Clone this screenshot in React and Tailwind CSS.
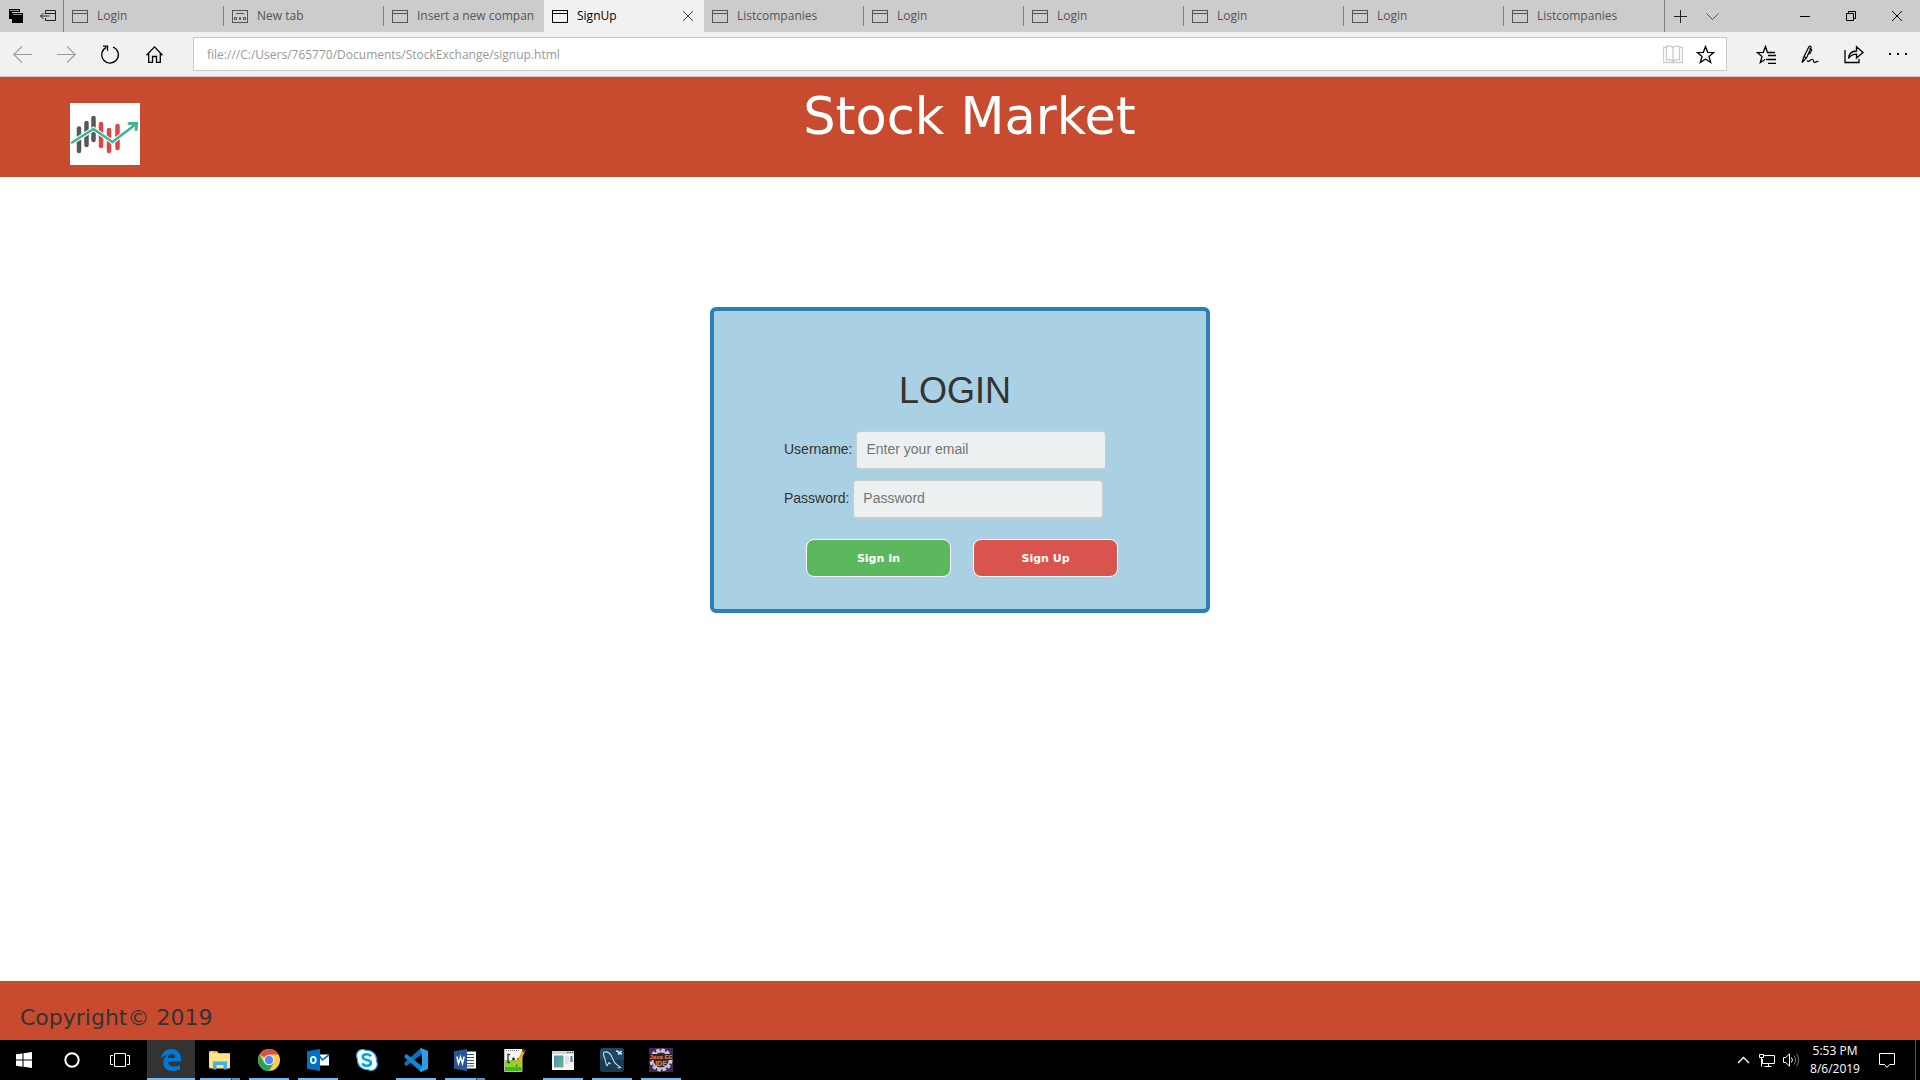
const tabs = [
  { title: "Login" },
  { title: "New tab", kind: "new" },
  { title: "Insert a new compan" },
  { title: "SignUp", active: true },
  { title: "Listcompanies" },
  { title: "Login" },
  { title: "Login" },
  { title: "Login" },
  { title: "Login" },
  { title: "Listcompanies" },
];

function Svg({ w, h, children, className = "" }) {
  return (
    <svg
      width={w}
      height={h}
      viewBox={`0 0 ${w} ${h}`}
      fill="none"
      stroke="currentColor"
      className={`block shrink-0 ${className}`}
      aria-hidden="true"
    >
      {children}
    </svg>
  );
}

function TabIcon({ kind }) {
  return (
    <Svg w={16} h={13}>
      <rect x="0.5" y="0.5" width="15" height="12" />
      {kind === "new" ? (
        <>
          <path d="M4 3.5h8" />
          <path d="M2.500 7.500h2v2h-2zM11.500 7.500h2v2h-2zM7.500 7.500h1v2h-1z" />
        </>
      ) : (
        <path d="M0 3.5h16" />
      )}
    </Svg>
  );
}

function Tab({ tab, divider }) {
  const tone = tab.active ? "bg-[#f1f1f1] text-black" : "text-[#555]";
  return (
    <div className={`flex min-w-0 flex-1 items-center ${tone}`}>
      <button type="button" className="flex h-8 min-w-0 flex-1 items-center gap-2 pl-2">
        <TabIcon kind={tab.kind} />
        <span className="flex-1 overflow-hidden whitespace-nowrap pl-px text-left text-xs leading-5">
          {tab.title}
        </span>
      </button>
      {tab.active && (
        <button type="button" aria-label="Close tab" className="flex h-8 w-8 items-center justify-center text-[#444]">
          <Svg w={10} h={10}>
            <path d="M0 0l10 10M10 0L0 10" />
          </Svg>
        </button>
      )}
      {divider && <span className="h-5 w-px bg-[#808080]" />}
    </div>
  );
}

function TabBar() {
  return (
    <div className="flex h-8 items-stretch bg-[#ccc]">
      <div className="flex w-16 shrink-0 items-center justify-between border-r border-[#808080] pl-[9px] pr-[7px]">
        <button type="button" aria-label="Tabs you have set aside">
          <Svg w={14} h={14}>
            <path d="M0 0h11v3H3v7H0z" fill="black" stroke="none" />
            <path d="M3 4h11v10H3z" fill="black" stroke="none" />
            <path d="M1 1.500h9M4 5.500h9" stroke="#ccc" strokeWidth="0.7" />
          </Svg>
        </button>
        <button type="button" aria-label="Set these tabs aside" className="text-[#222]">
          <Svg w={16} h={12}>
            <path d="M5.500 4V.5h10v10h-10V8M5 3.500h11M.5 6h9M3.500 3L.5 6l3 3" />
          </Svg>
        </button>
      </div>
      <div className="flex min-w-0 flex-1">
        {tabs.map((tab, i) => (
          <Tab key={i} tab={tab} divider={!tab.active && i !== 2 && i !== tabs.length - 1} />
        ))}
      </div>
      <div className="flex w-[118px] shrink-0 items-center border-l border-[#808080] text-[#222]">
        <button type="button" aria-label="New tab" className="flex h-8 w-[30px] items-center justify-center">
          <Svg w={13} h={13}>
            <path d="M6.500 0v13M0 6.500h13" />
          </Svg>
        </button>
        <button type="button" aria-label="Show tab previews" className="flex h-8 w-[34px] items-center justify-center text-[#555]">
          <Svg w={13} h={7}>
            <path d="M.5.5l6 6 6-6" />
          </Svg>
        </button>
      </div>
      <div className="flex shrink-0 text-black">
        <button type="button" aria-label="Minimize" className="flex w-[46px] items-center justify-center">
          <Svg w={10} h={1}>
            <path d="M0 .5h10" />
          </Svg>
        </button>
        <button type="button" aria-label="Restore" className="flex w-[46px] items-center justify-center">
          <Svg w={10} h={10}>
            <path d="M.5 2.500h7v7h-7zM2.500 2V.5h7v7H8" />
          </Svg>
        </button>
        <button type="button" aria-label="Close" className="flex w-[46px] items-center justify-center">
          <Svg w={10} h={10}>
            <path d="M0 0l10 10M10 0L0 10" />
          </Svg>
        </button>
      </div>
    </div>
  );
}

function ToolButton({ label, className = "", children }) {
  return (
    <button type="button" aria-label={label} className={`flex h-[44px] w-[44px] shrink-0 items-center justify-center ${className}`}>
      {children}
    </button>
  );
}

function Toolbar() {
  return (
    <div className="flex h-[45px] items-center border-b border-[#c8c8c8] bg-[#f1f1f1] text-black">
      <ToolButton label="Back" className="text-[#999]">
        <Svg w={19} h={17}>
          <path d="M19 8.500H.8M9 .4L.8 8.500 9 16.600" strokeWidth="1.1" />
        </Svg>
      </ToolButton>
      <ToolButton label="Forward" className="text-[#999]">
        <Svg w={19} h={17}>
          <path d="M0 8.500h18.200M10 .4l8.200 8.100-8.200 8.100" strokeWidth="1.1" />
        </Svg>
      </ToolButton>
      <ToolButton label="Refresh">
        <Svg w={18} h={19}>
          <path d="M12 2a8.300 8.300 0 1 1-6.800.4M2 1.200h4.500v4.600" strokeWidth="1.3" />
        </Svg>
      </ToolButton>
      <ToolButton label="Home">
        <Svg w={17} h={17}>
          <path d="M.5 9.200l8-8.300 8 8.300M2.700 7.500v8.800h3.800v-5.800h4v5.800h3.800V7.500" strokeWidth="1.3" />
        </Svg>
      </ToolButton>
      <div className="mx-[17px] flex h-[34px] min-w-0 flex-1 items-center border border-[#c8c8c8] bg-white pl-[13px] pr-[5px]">
        <input
          aria-label="Address"
          defaultValue="file:///C:/Users/765770/Documents/StockExchange/signup.html"
          className="h-8 min-w-0 flex-1 bg-transparent text-xs text-[#999] outline-none"
        />
        <button type="button" aria-label="Reading view" className="flex w-8 justify-center text-[#ccc]">
          <Svg w={20} h={19}>
            <path d="M10 2.500v14M10 2.500C8.500.7 5 .7 3.500 1.500v13.500c2-.6 5-.4 6.500 1.500 1.500-1.900 4.500-2.100 6.500-1.500V1.500c-1.500-.8-5-.8-6.500 1M3.500 2.500h-3v15h19v-15h-3" strokeWidth="1.3" />
          </Svg>
        </button>
        <button type="button" aria-label="Add to favorites" className="flex w-8 justify-center">
          <Svg w={19} h={19}>
            <path d="M9.500 1.500l2.200 5.800 6.100.2-4.800 3.900 1.700 6.100-5.200-3.500-5.200 3.500L6 11.400 1.200 7.500l6.100-.2z" strokeWidth="1.3" />
          </Svg>
        </button>
      </div>
      <ToolButton label="Hub">
        <Svg w={20} h={19}>
          <path d="M19 7.500h-7.500L9.500 1.500 7.300 7.300l-6.100.2L6 11.400l-1.700 6.100L9 14.500M12 10.500h8M10 14.500h10M12 18.500h8" strokeWidth="1.3" />
        </Svg>
      </ToolButton>
      <ToolButton label="Add notes">
        <Svg w={18} h={19}>
          <path d="M1 17.500l2-6L8 1.600c1-.9 2.500-.2 2 1.200L5.500 13l-4.500 4.500zM3 11.500L5.500 13M8.500 3l2.300 2-2.300 4.200M6 15.500c2 3 3.500-2 5.500-1s.5 3 2.500 2.800 1.500-1.500 3.500-.8" strokeWidth="1.2" />
        </Svg>
      </ToolButton>
      <ToolButton label="Share">
        <Svg w={20} h={19}>
          <path d="M1 5v12.500h14V14M4.500 13.500C5 8 8.500 6 12.500 6V1.700L19 7.500l-6.500 5.500V9.200c-3.500 0-6 1.300-8 4.300z" strokeWidth="1.3" />
        </Svg>
      </ToolButton>
      <ToolButton label="Settings and more">
        <Svg w={18} h={3}>
          <path d="M0 0h2v2H0zM8 0h2v2H8zM16 0h2v2h-2z" fill="black" stroke="none" />
        </Svg>
      </ToolButton>
    </div>
  );
}

function Logo() {
  const bars = [
    [9, 25.500, 48, "#555759"],
    [16.500, 20, 42, "#555759"],
    [23.500, 15, 37, "#555759"],
    [31, 21, 43, "#de4545"],
    [39, 27, 48, "#de4545"],
    [47.500, 23, 45, "#de4545"],
  ];
  return (
    <svg width="70" height="62" viewBox="0 0 70 62" className="block shrink-0 bg-white" role="img" aria-label="Stock Market logo">
      {bars.map(([x, y1, y2, c]) => (
        <path key={x} d={`M${x} ${y1}V${y2}`} stroke={c} strokeWidth="4.500" strokeLinecap="round" />
      ))}
      <path d="M2 39.500L23.500 26 42.500 39 66 21" fill="none" stroke="white" strokeWidth="4.500" />
      <path d="M2 39.500L23.500 26 42.500 39 66 21" fill="none" stroke="#3ab795" strokeWidth="2.600" strokeLinecap="round" />
      <path d="M59 20.500h7.500l-.3 6" fill="none" stroke="#3ab795" strokeWidth="3" strokeLinecap="round" />
    </svg>
  );
}

function Field({ id, label, ...rest }) {
  return (
    <div className="flex items-center gap-1">
      <label htmlFor={id} className="pb-[3px]">{label}</label>
      <input
        id={id}
        className="h-[39px] w-[250px] rounded border border-b-2 border-[#ccc] bg-[#ecf0f1] px-[9px] pb-0.5 text-sm outline-none placeholder:text-[#757575]"
        {...rest}
      />
    </div>
  );
}

function LoginCard() {
  return (
    <form className="mx-auto mt-[130px] w-[500px] rounded-md border-4 border-[#2980b9] bg-[#aad0e3] pb-8 pl-[70px] pr-20 pt-[59px] font-['Liberation_Sans',sans-serif] text-sm text-[#333]">
      <h1 className="mb-[19px] text-center text-4xl leading-[42px]">LOGIN</h1>
      <div className="flex flex-col gap-2.5">
        <Field id="username" label="Username:" type="text" placeholder="Enter your email" />
        <Field id="password" label="Password:" type="password" placeholder="Password" />
      </div>
      <div className="mt-5 flex gap-[22px] pl-[22px] font-['DejaVu_Sans',sans-serif] text-[11px] font-black text-white">
        <button type="button" className="h-[38px] w-[145px] shrink-0 rounded-lg border border-white bg-[#5cb85c] pt-0.5">
          Sign In
        </button>
        <button type="button" className="h-[38px] w-[145px] shrink-0 rounded-lg border border-white bg-[#d9534f] pt-0.5">
          Sign Up
        </button>
      </div>
    </form>
  );
}

function EdgeIcon() {
  return (
    <svg width="20" height="22" viewBox="0 0 20 22">
      <path d="M0 9.500C.8 4 4.500 0 10.300 0 16.500 0 20 4.500 20 10v2.500H6.800c.2 3.500 3 5 6.200 5 2.300 0 4.300-.6 6-1.700v4.400c-2 1.200-4.500 1.800-7.200 1.800C6.200 22 2.300 18.700 2.300 13.500c0-3.300 1.700-6 4.500-7.500C3.800 6.200 1.500 7.500 0 9.500zm6.900-.6h7.200c0-2.400-1.200-3.900-3.400-3.900-2.100 0-3.500 1.500-3.800 3.900z" fill="#0078d7" />
    </svg>
  );
}

function ExplorerIcon() {
  return (
    <svg width="22" height="19" viewBox="0 0 22 19">
      <path d="M0 1.500V1q0-.7.700-.7H8L9.500 2H21v15.500H.8L0 16z" fill="#fde28a" />
      <path d="M1 0h7v2H1zM9 2h12v1H9z" fill="#e9b53a" />
      <path d="M2 .6h2v1H2z" fill="#fff" />
      <path d="M4 18.500V10.500h14v8h-3.500v-4.500h-7v4.500z" fill="#3eb3e6" />
    </svg>
  );
}

function ChromeIcon() {
  return (
    <svg width="22" height="22" viewBox="0 0 22 22">
      <circle cx="11" cy="11" r="11" fill="#ffcd40" />
      <path d="M11 11L1.500 5.500A11 11 0 0 1 20.500 5.500H11z" fill="#dd5144" />
      <path d="M1.500 5.500A11 11 0 0 0 11 22l4.800-8.300L11 11 6.200 13.700z" fill="#1fa463" />
      <circle cx="11" cy="11" r="5.300" fill="#f1f1f1" />
      <circle cx="11" cy="11" r="4.200" fill="#4c8bf5" />
    </svg>
  );
}

function OutlookIcon() {
  return (
    <svg width="22" height="22" viewBox="0 0 22 22">
      <path d="M12 5.500h10v11H12z" fill="#fff" />
      <path d="M12 6.500l3.500 4.500L22 6" fill="none" stroke="#0072c6" strokeWidth="1.600" />
      <path d="M0 2.200L13 0v22L0 19.800z" fill="#0072c6" />
      <ellipse cx="6.300" cy="11" rx="2.400" ry="3.200" fill="none" stroke="#fff" strokeWidth="1.800" />
    </svg>
  );
}

function SkypeIcon() {
  return (
    <svg width="22" height="22" viewBox="0 0 22 22">
      <path d="M6.500.5c1.400 0 2.500.3 3.400.9C15.700.8 21 5 20.500 12c2.200 4.500-.8 9.500-5.300 9.500-1.300 0-2.400-.4-3.300-1C6 21 1 16.500 1.400 10-.8 5.500 1.800.5 6.500.5z" fill="#fff" stroke="#16a9e8" strokeWidth="1.200" />
      <path d="M14.700 7.300C13.800 5.700 12.300 5.200 10.700 5.200c-2.400 0-4 1.100-4 2.900 0 4 8.200 1.800 8.200 5.500 0 2-1.800 3.200-4.100 3.200-2 0-3.800-.8-4.500-2.600" fill="none" stroke="#00a5e8" strokeWidth="2.600" />
    </svg>
  );
}

function VsCodeIcon() {
  return (
    <svg width="24" height="24" viewBox="0 0 24 24">
      <path d="M17 0L.5 14.500v2L2.500 18 18 6z" fill="#0e70b5" />
      <path d="M17 24L.5 9.500v-2L2.500 6 18 18z" fill="#1684ce" />
      <path d="M17 0l7 3v18l-7 3-1-1 2-5V6l-2-5z" fill="#2a9fe8" />
    </svg>
  );
}

function WordIcon() {
  return (
    <svg width="22" height="22" viewBox="0 0 22 22">
      <path d="M12 2.500h10v17H12z" fill="#fff" />
      <path d="M13 5.500h7M13 8.500h7M13 11.500h7M13 14.500h7M13 17h7" stroke="#2b579a" strokeWidth="1.200" />
      <path d="M0 2.200L13 0v22L0 19.800z" fill="#2b579a" />
      <path d="M2.800 7.500l1.700 7 2-6.500 2 6.500 1.700-7" fill="none" stroke="#fff" strokeWidth="1.500" />
    </svg>
  );
}

function NotepadIcon() {
  return (
    <svg width="23" height="24" viewBox="0 0 23 24">
      <path d="M1 1h18v22H1z" fill="#f4f6f1" />
      <path d="M1 12h18v11H1z" fill="#8ad432" />
      <path d="M1 19h18v4H1z" fill="#45b41c" />
      <path d="M1.500 1v22.500h17.500V5" fill="none" stroke="#bbb" />
      <path d="M3 2.500h14" stroke="#888" strokeDasharray="1 1" />
      <path d="M7 6.500H5v8h2M9 11h3M14 11h3M10.500 9.500v3" stroke="#333" strokeWidth="1.300" fill="none" />
      <path d="M20 1l2.500 1.800L16 16l-3 2.500.5-4z" fill="#f0a325" />
      <path d="M20 1l2.500 1.800-1.200 2.300-2.300-1.800z" fill="#8d3720" />
      <path d="M13 18.500l.3-2 1.500 1z" fill="#222" />
    </svg>
  );
}

function AppWindowIcon() {
  return (
    <svg width="22" height="19" viewBox="0 0 22 19">
      <defs>
        <linearGradient id="pane" x1="0" y1="0" x2="1" y2="1">
          <stop offset="0" stopColor="#4a8fb0" />
          <stop offset="1" stopColor="#6fb586" />
        </linearGradient>
      </defs>
      <path d="M0 0h22v19H0z" fill="#f6f6f6" />
      <path d="M0 0h22v3H0z" fill="#cfd5da" />
      <path d="M15 1h1.500v1H15zM17.500 1H19v1h-1.500zM20 1h1.200v1H20z" fill="#555" />
      <path d="M2 4.500h9.500v12H2z" fill="url(#pane)" />
      <path d="M13 6h4M13 8h4M13 10h4M13 12h4" stroke="#ccc" />
      <path d="M18.500 5h2v6h-2z" fill="#467cae" />
      <path d="M18.500 8h2v3h-2z" fill="#54a865" />
    </svg>
  );
}

function MySqlIcon() {
  return (
    <svg width="24" height="24" viewBox="0 0 24 24">
      <rect width="24" height="24" rx="3" fill="#1d4868" />
      <path d="M0 12h24v9q0 3-3 3H3q-3 0-3-3z" fill="#173a55" />
      <path d="M7 18c-1.500-2-1.200-4.500-2-7C4 8.500 2.500 6 4 4.200c3-1 6 1 7.500 4 1.500 3.300 2.500 6.500 5 8.300 1.500 1 3 1.800 4 3-1.500 0-2.500.3-3 .5M7 18l1.800-3.500 2 1.500" fill="none" stroke="#c9dbe7" strokeWidth="1.100" />
      <path d="M16 3l2 .5L20 5.500l2 .5M18 6.500L21.500 3" stroke="#dfe9f0" strokeWidth="1.500" />
    </svg>
  );
}

function EclipseIcon() {
  return (
    <svg width="24" height="24" viewBox="0 0 24 24">
      <path d="M0 0h24v24H0z" fill="#41285f" />
      <circle cx="12" cy="12" r="10" fill="none" stroke="#c9c5cc" strokeWidth="3" strokeDasharray="3.500 1.740" />
      <circle cx="12" cy="12" r="8.500" fill="#3a2930" stroke="#c9c5cc" strokeWidth="1.800" />
      <path d="M0 6h24v6H0z" fill="#30202a" />
      <g fill="#f28327" stroke="none" textAnchor="middle" fontFamily="Liberation Sans" fontWeight="bold">
        <text x="12" y="11" fontSize="6">Java EE</text>
        <text x="12" y="17.500" fontSize="7">IDE</text>
      </g>
    </svg>
  );
}

const apps = [
  { name: "Microsoft Edge", Icon: EdgeIcon, state: "active" },
  { name: "File Explorer", Icon: ExplorerIcon, state: "multi" },
  { name: "Google Chrome", Icon: ChromeIcon, state: "open" },
  { name: "Outlook", Icon: OutlookIcon, state: "open" },
  { name: "Skype", Icon: SkypeIcon, state: "idle" },
  { name: "Visual Studio Code", Icon: VsCodeIcon, state: "open" },
  { name: "Word", Icon: WordIcon, state: "multi" },
  { name: "Notepad++", Icon: NotepadIcon, state: "idle" },
  { name: "Application", Icon: AppWindowIcon, state: "open" },
  { name: "MySQL Workbench", Icon: MySqlIcon, state: "open" },
  { name: "Eclipse", Icon: EclipseIcon, state: "open" },
];

function TaskButton({ app }) {
  const { name, Icon, state } = app;
  return (
    <button type="button" aria-label={name} className={`flex h-10 w-12 flex-col items-center ${state === "active" ? "bg-[#333]" : ""}`}>
      <span className="flex flex-1 items-center pt-0.5">
        <Icon />
      </span>
      <span className={`flex h-0.5 ${state === "active" ? "w-12" : "w-10"}`}>
        {state !== "idle" && <span className="flex-1 bg-[#76b9ed]" />}
        {state === "multi" && <span className="w-[9px] border-l border-[#2b4258] bg-[#5b8fb8]" />}
      </span>
    </button>
  );
}

function Taskbar() {
  return (
    <div className="flex h-10 items-center bg-black text-white">
      <button type="button" aria-label="Start" className="flex w-12 justify-center">
        <Svg w={16} h={16}>
          <path d="M0 2.300L6.500 1.400V7.500H0zM7.500 1.200L16 0v7.500H7.500zM0 8.500h6.500v6.200L0 13.800zM7.500 8.500H16V16l-8.500-1.200z" fill="white" stroke="none" />
        </Svg>
      </button>
      <button type="button" aria-label="Cortana" className="flex w-12 justify-center">
        <Svg w={16} h={16}>
          <circle cx="8" cy="8" r="6.700" strokeWidth="2" />
        </Svg>
      </button>
      <button type="button" aria-label="Task View" className="flex w-12 justify-center">
        <Svg w={20} h={14}>
          <path d="M4.500.5h11v13h-11zM3 2.500H.5v9H3M17 2.500h2.500v9H17" />
        </Svg>
      </button>
      <div className="ml-[3px] flex gap-px">
        {apps.map((app) => (
          <TaskButton key={app.name} app={app} />
        ))}
      </div>
      <div className="ml-auto flex h-10 items-center">
        <button type="button" aria-label="Show hidden icons" className="flex w-6 justify-center">
          <Svg w={13} h={8}>
            <path d="M1 7l5.500-5.500L12 7" strokeWidth="1.300" />
          </Svg>
        </button>
        <button type="button" aria-label="Network" className="flex w-6 justify-center">
          <Svg w={16} h={13}>
            <path d="M5 1.500h10.500v8H3.500V5M.5.500h4v3h-4zM2.500 4v8.500M9.500 10v2M5.500 12.500h7" />
          </Svg>
        </button>
        <button type="button" aria-label="Volume" className="flex w-6 justify-center">
          <Svg w={17} h={14}>
            <path d="M.5 4.500h2.300l3.700-3.700v12.400L2.800 9.500H.5zM8.500 4.500q1.800 2.500 0 5" />
            <path d="M11 2.500q3.200 4.500 0 9M13.500.8q4.400 6.200 0 12.400" stroke="#777" />
          </Svg>
        </button>
        <button type="button" className="w-[64px] text-center text-xs leading-[18px]">
          <span className="block">5:53 PM</span>
          <span className="block">8/6/2019</span>
        </button>
        <button type="button" aria-label="Action Center" className="flex w-[40px] justify-center">
          <Svg w={16} h={17}>
            <path d="M.5 1.500h15v11h-5L8 15.500l-2.500-3h-5z" />
          </Svg>
        </button>
        <span className="ml-2 mr-1 h-10 w-px bg-[#555]" />
      </div>
    </div>
  );
}

export default function App() {
  return (
    <div className="flex min-h-screen flex-col bg-white font-['Open_Sans',sans-serif]">
      <TabBar />
      <Toolbar />
      <header className="grid h-[100px] grid-cols-[140px_1fr_121px] bg-[#c84b2f] pt-[11px] text-white">
        <div className="pl-[70px] pt-[15px]">
          <Logo />
        </div>
        <p className="text-center font-['DejaVu_Sans',sans-serif] text-[51px] leading-[58px]">Stock Market</p>
      </header>
      <main className="flex-1">
        <LoginCard />
      </main>
      <footer className="h-[59px] bg-[#c84b2f] px-5 pt-[21px] font-['DejaVu_Sans',sans-serif] text-[22px] leading-8 text-[#333]">
        Copyright© 2019
      </footer>
      <Taskbar />
    </div>
  );
}
